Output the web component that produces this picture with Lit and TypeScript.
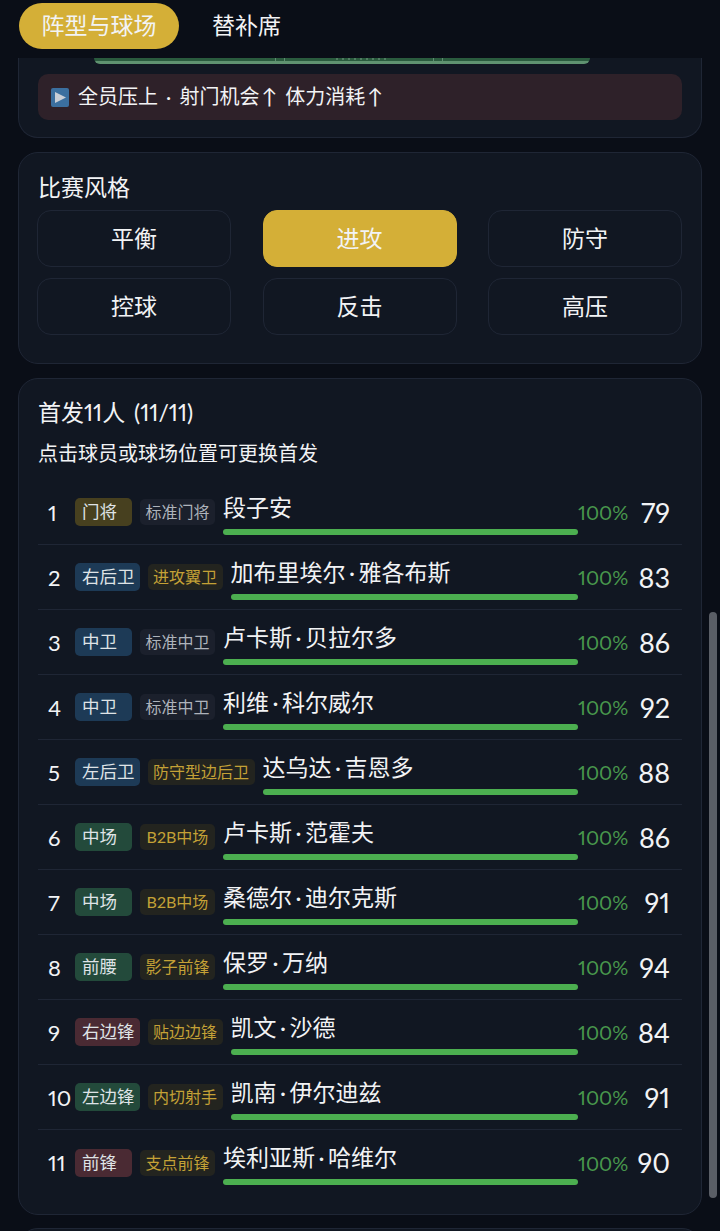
import { LitElement, css, html } from 'lit';
import { customElement } from 'lit/decorators.js';

type Player = { no: number; pos: string; tone: string; trait: string; gold: boolean; name: string; score: number };

const STYLES = ['平衡', '进攻', '防守', '控球', '反击', '高压'];

const PLAYERS: Player[] = [
    { no: 1, pos: '门将', tone: 'gk', trait: '标准门将', gold: false, name: '段子安', score: 79 },
    { no: 2, pos: '右后卫', tone: 'def', trait: '进攻翼卫', gold: true, name: '加布里埃尔·雅各布斯', score: 83 },
    { no: 3, pos: '中卫', tone: 'def', trait: '标准中卫', gold: false, name: '卢卡斯·贝拉尔多', score: 86 },
    { no: 4, pos: '中卫', tone: 'def', trait: '标准中卫', gold: false, name: '利维·科尔威尔', score: 92 },
    { no: 5, pos: '左后卫', tone: 'def', trait: '防守型边后卫', gold: true, name: '达乌达·吉恩多', score: 88 },
    { no: 6, pos: '中场', tone: 'mid', trait: 'B2B中场', gold: true, name: '卢卡斯·范霍夫', score: 86 },
    { no: 7, pos: '中场', tone: 'mid', trait: 'B2B中场', gold: true, name: '桑德尔·迪尔克斯', score: 91 },
    { no: 8, pos: '前腰', tone: 'mid', trait: '影子前锋', gold: true, name: '保罗·万纳', score: 94 },
    { no: 9, pos: '右边锋', tone: 'fwd', trait: '贴边边锋', gold: true, name: '凯文·沙德', score: 84 },
    { no: 10, pos: '左边锋', tone: 'mid', trait: '内切射手', gold: true, name: '凯南·伊尔迪兹', score: 91 },
    { no: 11, pos: '前锋', tone: 'fwd', trait: '支点前锋', gold: true, name: '埃利亚斯·哈维尔', score: 90 },
];

@customElement('app-root')
export class AppRoot extends LitElement {
    renderName(name: string) {
        const [first, last] = name.split('·');
        if (!last) return first;
        return html`${first}<span class="dot">·</span>${last}`;
    }

    renderRow(p: Player) {
        return html`
        <div class="row">
            <span class="no">${p.no}</span>
            <span class="pos ${p.tone}">${p.pos}</span>
            <span class="trait ${p.gold ? 'gold' : ''}">${p.trait}</span>
            <div class="info">
                <div class="name">${this.renderName(p.name)}</div>
                <div class="bar"></div>
            </div>
            <span class="pct">100%</span>
            <span class="score">${p.score}</span>
        </div>
        `;
    }

    render() {
        return html`
        <div class="tabs">
            <div class="tab active">阵型与球场</div>
            <div class="tab">替补席</div>
        </div>

        <section class="card pitch-card">
            <div class="pitch">
                <i></i><i></i><b></b><i></i><i></i>
            </div>
            <div class="note">
                <svg width="18" height="19" viewBox="0 0 18 19">
                    <rect width="18" height="19" rx="2" fill="#3b6f9f"/>
                    <path d="M4 4 L15 9.5 L4 15 Z" fill="#c9ced6"/>
                </svg>
                <span>全员压上 · 射门机会<em>↑</em> 体力消耗<em>↑</em></span>
            </div>
        </section>

        <section class="card style-card">
            <h2>比赛风格</h2>
            <div class="styles">
                ${STYLES.map((s) => html`<div class="style ${s === '进攻' ? 'on' : ''}">${s}</div>`)}
            </div>
        </section>

        <section class="card lineup">
            <h2>首发11人 (11/11)</h2>
            <p class="hint">点击球员或球场位置可更换首发</p>
            <div class="rows">
                ${PLAYERS.map((p) => this.renderRow(p))}
            </div>
        </section>

        <section class="card next"></section>

        <div class="scrollbar"></div>
        `;
    }

    static styles = css`
        :host{
            display: block;
            position: relative;
            height: 1231px;
            overflow: hidden;
            background: #0a0e17;
            color: #f2f3f5;
            font-family: Lato, "Noto Sans CJK SC", sans-serif;
            font-variant-numeric: proportional-nums;
            font-size: 23px;
        }

        .tabs{
            display: flex;
            align-items: flex-start;
            height: 58px;
            padding: 3px 0 0 19px;
            box-sizing: border-box;
            background: #0a0e17;
        }
        .tab{
            height: 46px;
            line-height: 45px;
            padding: 0 33px;
        }
        .tab.active{
            width: 160px;
            box-sizing: border-box;
            padding: 0;
            text-align: center;
            background: #d4af37;
            border-radius: 23px;
        }

        .card{
            margin: 14px 18px 0;
            background: #111722;
            border: 1px solid #1f2635;
            border-radius: 20px;
            box-sizing: border-box;
        }
        h2{
            margin: 0;
            font-size: 23px;
            font-weight: 400;
            line-height: 32px;
            word-spacing: 3px;
        }

        .pitch-card{
            margin-top: 0;
            height: 80px;
            padding: 0 19px;
            border-top: none;
            border-radius: 0 0 20px 20px;
        }
        .pitch{
            display: flex;
            height: 6px;
            margin: 0 92px 0 56px;
            padding-left: 181px;
            box-sizing: border-box;
            background: linear-gradient(#2a5b3e 0 3px, #5f9270 3px);
            border-radius: 0 0 8px 8px;
        }
        .pitch i{
            width: 1px;
            height: 3px;
            margin-right: 8px;
            background: #5f8d71;
        }
        .pitch i:nth-child(2){
            margin-right: 51px;
        }
        .pitch b{
            width: 53px;
            height: 2px;
            margin-right: 44px;
            background: repeating-linear-gradient(90deg, #4f7d61 0 2px, transparent 2px 6px);
        }
        .note{
            display: flex;
            align-items: center;
            gap: 9px;
            height: 46px;
            margin-top: 10px;
            padding-left: 13px;
            background: #2e2129;
            border-radius: 10px;
            font-size: 20px;
        }
        .note span{
            padding-bottom: 3px;
            word-spacing: 3px;
        }
        .note em{
            margin-left: 2px;
            font-style: normal;
            font-size: 21px;
        }

        .style-card{
            height: 212px;
            padding: 18px 19px 0;
        }
        .styles{
            display: grid;
            grid-template-columns: repeat(3, 194px);
            grid-auto-rows: 57px;
            column-gap: 31.5px;
            row-gap: 11px;
            margin: 7px 0 0 -1px;
        }
        .style{
            display: flex;
            align-items: center;
            justify-content: center;
            padding-bottom: 3px;
            box-sizing: border-box;
            border: 1px solid #1f2635;
            border-radius: 14px;
        }
        .style.on{
            background: #d4af37;
            border-color: #d4af37;
        }

        .lineup{
            height: 837px;
            padding: 17px 19px 0;
        }
        .hint{
            margin: 11px 0 0;
            font-size: 20px;
            line-height: 28px;
        }
        .rows{
            margin-top: 13px;
        }
        .row{
            display: flex;
            align-items: center;
            height: 65px;
            padding: 0 12px 0 10px;
            box-sizing: border-box;
            border-bottom: 1px solid #1f2635;
        }
        .row:last-child{
            border-bottom: none;
        }
        .no{
            width: 27px;
            flex: none;
            font-size: 22px;
        }
        .pos{
            flex: none;
            min-width: 57px;
            height: 28px;
            line-height: 28px;
            padding: 0 5px 0 7px;
            box-sizing: border-box;
            border-radius: 5px;
            font-size: 17.5px;
            color: #dfe3e6;
        }
        .pos.gk{
            background: #47401f;
        }
        .pos.def{
            background: #1d3a56;
        }
        .pos.mid{
            background: #234a3b;
        }
        .pos.fwd{
            background: #4a2a33;
        }
        .trait{
            flex: none;
            min-width: 75px;
            box-sizing: border-box;
            height: 26px;
            line-height: 26px;
            margin-left: 8px;
            padding: 0 5.5px;
            border-radius: 5px;
            background: #1b202c;
            font-size: 16px;
            text-align: center;
            color: #aeb3bb;
        }
        .trait.gold{
            background: #23241f;
            color: #c4a136;
        }
        .info{
            flex: 1;
            min-width: 0;
            margin: 2px 0 0 8px;
        }
        .name{
            line-height: 30px;
            font-size: 23px;
            white-space: nowrap;
        }
        .dot{
            padding: 0 3.5px;
        }
        .bar{
            height: 6px;
            margin-top: 7px;
            background: #4caf50;
            border-radius: 3px;
        }
        .pct{
            width: 49px;
            flex: none;
            font-size: 20px;
            color: #48964c;
        }
        .score{
            width: 43px;
            flex: none;
            font-size: 27px;
            text-align: right;
        }

        .next{
            height: 40px;
            margin-top: 13px;
        }

        .scrollbar{
            position: absolute;
            left: 709px;
            top: 612px;
            width: 8px;
            height: 586px;
            background: #5a5e66;
            border-radius: 4px;
        }
    `;
}
